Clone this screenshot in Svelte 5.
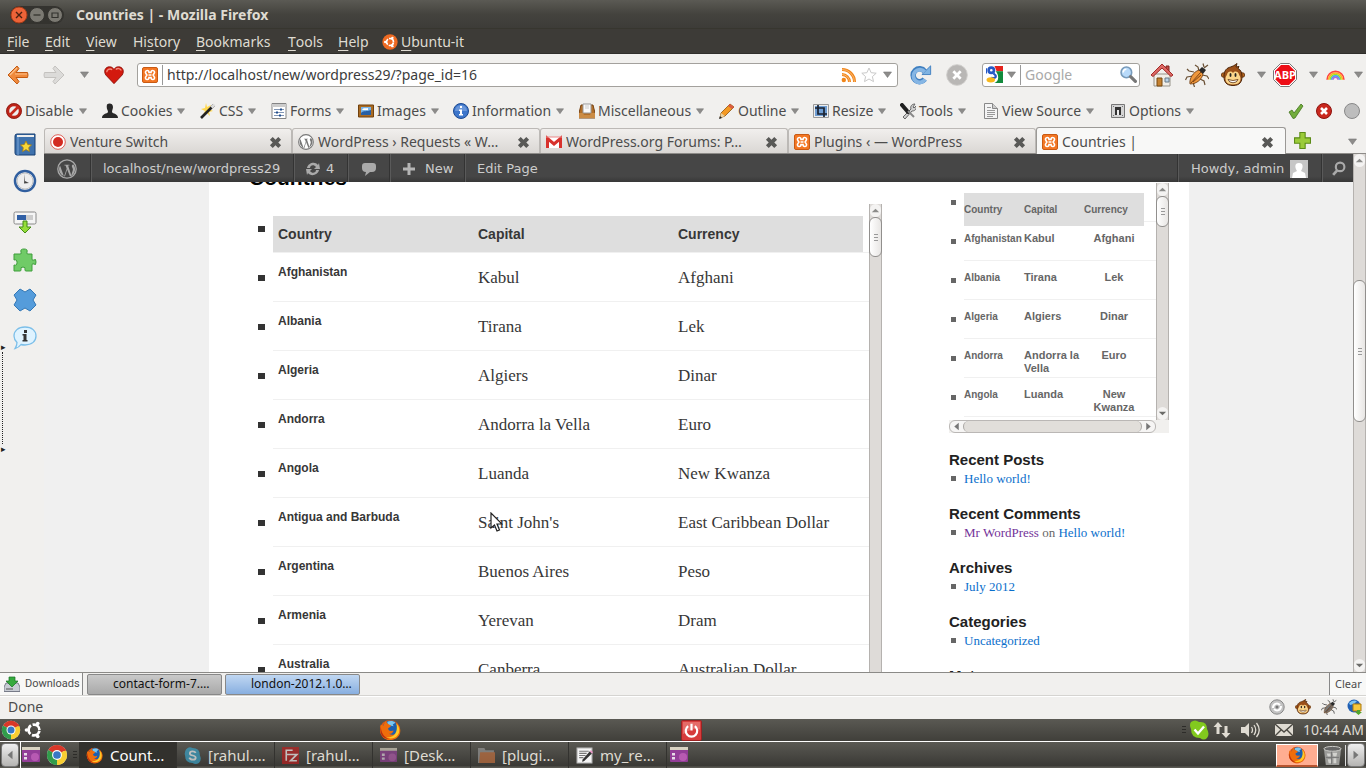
<script>
  const wpMark = (c) => `<circle cx="10" cy="10" r="9.2" fill="none" stroke="${c}" stroke-width="1.3"/><path d="M3 6.4 7 17.6 9.7 9.8 8.6 6.6H7.4V5.8h5v.8h-1.3l3.2 9.6 1.5-5c.5-1.8-1.1-3-1-4.300.1-1 .9-1.600 1.700-1.500A7.800 7.800 0 0 1 13 17.400L10.200 10.400 7.900 17.600A7.800 7.800 0 0 1 3 6.400z" fill="${c}"/>`;
  const xampp = '<rect x=".5" y=".5" width="15" height="15" rx="1.500" fill="#f37623" stroke="#c85a14"/><path d="M5.300 3.500c-1.800 0-2.300 1.800-1.400 3l1 1.500-1 1.500c-.9 1.200-.4 3 1.400 3 1.300 0 1.700-.8 1.700-2h2c0 1.200.4 2 1.700 2 1.800 0 2.300-1.800 1.400-3l-1-1.500 1-1.500c.9-1.200.4-3-1.400-3-1.300 0-1.700.8-1.700 2H7c0-1.200-.4-2-1.700-2zM6.500 8h3" fill="none" stroke="#fff" stroke-width="1.600"/>';
  const monkey = '<circle cx="2.600" cy="12" r="2.300" fill="#b5651d" stroke="#5a2d0c" stroke-width=".8"/><circle cx="21.400" cy="12" r="2.300" fill="#b5651d" stroke="#5a2d0c" stroke-width=".8"/><path d="M12 22.500c-7 0-9-4-9-9C3 7 6 5 9.500 4c2-.6 4-1.500 6.500-3.500L15 4l3-.5-1 2c3 1.500 4 4.500 4 8 0 5-2 9-9 9z" fill="#9b5019" stroke="#4a2408"/><path d="M12 21.500c-6 0-7.500-3-7.500-6 0-2 1-2.500 1.500-4C6.500 8 11 7.500 12 10c1-2.500 5.500-2 6 1.500.500 1.500 1.500 2 1.500 4 0 3-1.500 6-7.500 6z" fill="#fbd58a"/><ellipse cx="9.500" cy="12" rx="1" ry="2" fill="#222"/><ellipse cx="14.500" cy="12" rx="1" ry="2" fill="#222"/><path d="M7 16.500q5 2 10 0-1 3.300-5 3.300t-5-3.300z" fill="#fff" stroke="#5a2d0c" stroke-width=".8"/>';
  const bug = (c, l) => `<g fill="none" stroke="${l}" stroke-width="1.200"><path d="m9 9-5-1-2-2M8 13l-6 1-1.500 3M10 18l-1.500 3 1 3M14 8l-1-4-3-2M17 12l5 1 2 3M15 16l4 2 1 4M19 5l4-3M19 4l-1-3.500"/></g><path d="M5 21c-1-5 3-12 9-14l4 4c-1 5-6 10-13 10z" fill="${c}" stroke="#68360c" stroke-width=".8"/><path d="M6 20 16 9M8 19l8-7" stroke="#633009" stroke-width=".8"/><path d="m14 7 3-3 4 3-3 4z" fill="#292929"/>`;
  const firefox = '<circle cx="12" cy="12" r="11" fill="#e8590c"/><circle cx="12.500" cy="10" r="8.500" fill="#1d5fae"/><path d="M9 3c3-1.500 7-1 9 1l-3 2 1 2-4-1-2 2z" fill="#79c6ef"/><path d="M2 6c1 1 2 1 3 1 1-3 2-4 3-5 0 2 1 3 3 4l2 1c0 2-2 2-3 3 0 2 1 3 3 3l3-.5c-1 3-3 4-5 3.500 4 3 9 0 9-4 1 1 1 3 .5 4C20 12 21 8 18 4c4 2 6 6 5 11-1 5-6 8-11 8C4 23-1 14 2 6z" fill="#ef6d0b"/><path d="M19 5c4 4 4 10 1 13-3 4-9 4-12 2 9 1 13-6 11-15z" fill="#ffc928"/><path d="M2 8c0 6 3 12 9 14C4 22 0 16 2 8z" fill="#b93010"/>';
  const chrome = '<circle cx="12" cy="12" r="11" fill="#ddd"/><path d="M12 12 2.500 6.500A11 11 0 0 1 21.500 6.500z" fill="#d93829"/><path d="M12 12 21.500 6.500A11 11 0 0 1 12 23z" fill="#f9ce32"/><path d="M12 12 12 23A11 11 0 0 1 2.500 6.500z" fill="#319c4b"/><path d="M12 6.500h9.500" stroke="#d93829" stroke-width="2"/><circle cx="12" cy="12" r="5.400" fill="#fff"/><circle cx="12" cy="12" r="4.200" fill="#3878c5"/>';
  const desk = '<rect x="0" y="1" width="18" height="15" rx="1" fill="#933e98"/><rect x="0" y="1" width="18" height="3" fill="#d9d3c2"/><circle cx="13" cy="11" r="4" fill="#c667bd" opacity=".7"/><path d="M2 7h3v2.500H2zM2 11h3v2.500H2z" fill="#e8dbe8"/>';
  const ubuntu = (c) => `<circle cx="12" cy="12" r="6.500" fill="none" stroke="${c}" stroke-width="3.200" stroke-dasharray="11.600 2" stroke-dashoffset="-.9"/><circle cx="3" cy="12" r="2.200" fill="${c}"/><circle cx="16.500" cy="4.200" r="2.200" fill="${c}"/><circle cx="16.500" cy="19.800" r="2.200" fill="${c}"/>`;

  const icons = {
    ubuntu: [24, '<circle cx="12" cy="12" r="11.500" fill="#ee6a22"/><circle cx="12" cy="12" r="5.200" fill="none" stroke="#fff" stroke-width="2.500" stroke-dasharray="9.300 1.600" stroke-dashoffset="-.6"/><g fill="#fff"><circle cx="4.800" cy="12" r="1.800"/><circle cx="15.600" cy="5.800" r="1.800"/><circle cx="15.600" cy="18.200" r="1.800"/></g>'],
    ubuntuWhite: [24, ubuntu('#fff')],
    back: [24, '<path d="M11 3 2 12l9 9 2-2.500-3-4h11.500q1-2.500 0-5H10l3-4z" fill="#f08a3c" stroke="#c25a12" stroke-linejoin="round"/><path d="M4 12 11 5M9 11h12" stroke="#fbc08a" stroke-width="1.200"/>'],
    forward: [24, '<path d="m13 3 9 9-9 9-2-2.500 3-4H2.500q-1-2.500 0-5H14l-3-4z" fill="#dcdbd9" stroke="#c4c2bf" stroke-linejoin="round"/>'],
    heart: [22, '<path d="M11 20.500 2 11C-1 6 2 2 6 2c3 0 4 1.500 5 3 1-1.500 2-3 5-3 4 0 7 4 4 9z" fill="#d3190e" stroke="#8f1008"/><path d="M3 8c0-3 3-4.500 6-3M13 5c2-2 5-1 6 1" fill="none" stroke="#f48b7c" stroke-width="1.500"/>'],
    xampp: [16, xampp],
    rss: [16, '<g fill="none" stroke="#f08519" stroke-width="3"><path d="M1 2.500A12.500 12.500 0 0 1 13.500 15M1 7.500A7.500 7.500 0 0 1 8.500 15"/></g><circle cx="2.800" cy="13" r="2.200" fill="#f08519"/><path d="M1 2.500A12.500 12.500 0 0 1 13.500 15M1 7.500A7.500 7.500 0 0 1 8.500 15" fill="none" stroke="#fcc184" stroke-width=".8"/>'],
    star: [16, '<path d="m8 1 2.100 4.700 5.100.5-3.800 3.400 1.100 5L8 12l-4.500 2.600 1.100-5L.8 6.200l5.100-.5z" fill="#fff" stroke="#c9c9c9"/>'],
    reload: [24, '<path d="M16 15.500A7 7 0 1 1 16 7" transform="translate(0 1)" fill="none" stroke="#3f7fc0" stroke-width="6"/><path d="M13 11.500h9.500V2z" fill="#7fb3e2" stroke="#3f7fc0"/><path d="M16.500 16.500A7 7 0 1 1 16 8" transform="translate(0 .500)" fill="none" stroke="#86b6e4" stroke-width="4"/>'],
    stop: [24, '<circle cx="12" cy="12" r="11.300" fill="#b9b7b5" stroke="#cfcdcb"/><path d="m8 8 8 8m0-8-8 8" stroke="#fff" stroke-width="3"/>'],
    google: [16, '<path fill="#fff" d="M0 0h16v16H0z"/><path d="M8 0h8v5h-6z" fill="#e5231d"/><path d="M9 5h7v11H8c5-2 4-8 1-11z" fill="#128a3c"/><path d="M0 9c4-1 7 1 7 4v3H0z" fill="#fff"/><circle cx="5" cy="4" r="2.500" fill="none" stroke="#2558c5" stroke-width="2.500"/><path d="M7 7c4 3 2 5-2 4M0 2v5" fill="none" stroke="#2558c5" stroke-width="2"/><ellipse cx="4.500" cy="13" rx="4" ry="2.500" fill="#f8b81b"/>'],
    search: [16, '<circle cx="6" cy="6" r="5" fill="#b8dafa" stroke="#789bbb" stroke-width="1.500"/><path d="M3 6q0-3 3-3" stroke="#fff" stroke-width="1.500" fill="none"/><path d="m10 10 4.500 4.500" stroke="#777" stroke-width="3" stroke-linecap="round"/>'],
    home: [24, '<path d="M4 11h16v12H4z" fill="#f1eee8" stroke="#98938a"/><path d="M16 3h3v5h-3z" fill="#c64a45" stroke="#802421"/><path d="M12 1 1 12l2 1.500 9-8.500 9 8.500 2-1.500z" fill="#dc6864" stroke="#a22b28" stroke-linejoin="round"/><path d="M7 15h5v8H7z" fill="#c58130" stroke="#774811"/><path d="M15 15h4v4h-4z" fill="#b9d3e9" stroke="#687a88"/>'],
    bug: [24, bug('#ef973c', '#6a5034')],
    bugGrey: [24, bug('#777', '#444')],
    monkey: [24, monkey],
    abp: [24, '<path d="M7.500.500h9l7 7v9l-7 7h-9l-7-7v-9z" fill="#fff" stroke="#777"/><path d="M8 2h8l6 6v8l-6 6H8l-6-6V8z" fill="#ed0d16"/>'],
    rainbow: [18, '<g fill="none" stroke-width="1.500"><path d="M1 14a8 8 0 0 1 16 0" stroke="#ff4242"/><path d="M2.500 14a6.500 6.500 0 0 1 13 0" stroke="#ffac28"/><path d="M4 14a5 5 0 0 1 10 0" stroke="#9ce81e"/><path d="M5.300 14a3.700 3.700 0 0 1 7.400 0" stroke="#45a7f5"/><path d="M6.600 14a2.400 2.400 0 0 1 4.800 0" stroke="#a66fe0"/></g>'],
    disable: [16, '<circle cx="8" cy="8" r="6.300" fill="#eee" stroke="#be2418" stroke-width="3"/><circle cx="8" cy="8" r="7.500" fill="none" stroke="#7f160f" stroke-width=".7"/><path d="m3.500 12.500 9-9" stroke="#c72a1d" stroke-width="2.600"/>'],
    cookies: [16, '<path d="M5 1.500C7-.300 11 .3 11 4c0 2-1 3-1 5 1 2 6 1.500 6 6H0c0-4.500 5-4 6-6 0-2-2-3-1-7.500z" fill="#282828"/>'],
    css: [16, '<path d="m6 0 1 4 4-2-2 4 4 2-4 1 1 4-3-3-4 2 2-4-4-2 4-1z" fill="#ffd84f"/><path d="M1 15 14 2" stroke="#222" stroke-width="2.600"/><path d="m11.500 4.500 3-3" stroke="#ddd" stroke-width="2.600"/>'],
    forms: [16, '<path d="M1 .500h14v15H1z" fill="#fff" stroke="#858585"/><path d="M1 1h14v3H1z" fill="#ccc"/><path d="M3 6.500h10M3 9.500h10M3 12.500h10" stroke="#8095b4"/><path d="M9 5.500h2v2H9zM5 8.500h2v2H5zM8 11.500h2v2H8z" fill="#214f8f"/>'],
    images: [16, '<path d="M.500 2h15v12H.500z" fill="#a96b23" stroke="#70410d"/><path d="M3 4h10v8H3z" fill="#79b5eb"/><path d="M3 10c3-3 5-1 10-3v5H3z" fill="#2860a5"/><path d="M4 7c2-3 3-1 6-2v2z" fill="#fff"/>'],
    info: [16, '<circle cx="8" cy="8" r="7.500" fill="#3d76cb" stroke="#1c4991"/><path d="M2 8a6 6 0 0 1 12 0z" fill="#8eb1e8" opacity=".55"/><path d="M7 3h2v2H7zM6 6.500h3V12H7V8H6zM6 11h4v1.500H6z" fill="#fff"/>'],
    misc: [16, '<path d="M2 2h12l2 8v5H0v-5z" fill="#b36f29" stroke="#774210"/><path d="M4 1h8v9H4z" fill="#fafafa" stroke="#999"/><path d="M6 3h4M6 5h4" stroke="#ccc"/><path d="M0 10h4l1 2h6l1-2h4v5H0z" fill="#cb8c45"/>'],
    outline: [16, '<path d="m2 10 9-9 4 3-9 9-5 2z" fill="#f49923" stroke="#8d540b" stroke-width=".8"/><path d="m11 1 4 3-2 2-4-3z" fill="#db5c42"/><path d="m2 10 4 3-5 2z" fill="#e8d0a2"/><path d="m1 13-1 3 3-1z" fill="#222"/>'],
    resize: [16, '<path d="M.500 1.500h15v13H.500z" fill="#eee" stroke="#999"/><path d="M2 3h12v10H2z" fill="#6f9ed4"/><path d="M5 2v9h9M2 5h9v9" fill="none" stroke="#1a2230" stroke-width="1.700"/>'],
    tools: [16, '<path d="m3 14 8-8c-1-3 1-5 4-5l-2 3 1 1 2-2c1 4-2 5-4 5l-7 8z" fill="#cfcfcf" stroke="#686868"/><path d="m2 2 6 7" stroke="#202020" stroke-width="4" stroke-linecap="round"/><path d="m8 8 6 6" stroke="#888" stroke-width="2"/>'],
    source: [16, '<path d="M1.500.500h8l5 5v10h-13z" fill="#f4f4f4" stroke="#888"/><path d="M9.500.500v5h5" fill="#ccc" stroke="#888"/><path d="M4 4.500h4M4 7.500h8M4 9.500h8M4 11.500h8M4 13.500h6" stroke="#999"/>'],
    options: [16, '<path d="M1.500 1.500h13v13h-13z" fill="#d5d5d5" stroke="#777"/><path d="M5 4h6v8H5z" fill="#333"/><path d="M7 7h2v5H7z" fill="#eee"/><path d="M3 3h1v1H3zM12 3h1v1h-1zM3 12h1v1H3zM12 12h1v1h-1z" fill="#777"/>'],
    check: [16, '<path d="m1 9 3-2 2 3 7-9 2 2-8 12-2 .500z" fill="#72ad3c" stroke="#44751e" stroke-width=".8"/>'],
    error: [16, '<circle cx="8" cy="8" r="7.500" fill="#c9281e" stroke="#8e120d"/><path d="m5 5 6 6m0-6-6 6" stroke="#fff" stroke-width="2.600"/>'],
    grey: [16, '<circle cx="8" cy="8" r="7.500" fill="#bdbdbd" stroke="#888"/>'],
    close: [14, '<path d="M4 1 7 4l3-3 3 3-3 3 3 3-3 3-3-3-3 3-3-3 3-3-3-3z" fill="#595957"/>'],
    plus: [16, '<path d="M5.500.500h5v5h5v5h-5v5h-5v-5h-5v-5h5z" fill="#9bcb3a" stroke="#5c8b17"/>'],
    venture: [16, '<circle cx="8" cy="8" r="7.300" fill="#fff" stroke="#dc5047" stroke-width=".9"/><circle cx="8" cy="8" r="5" fill="#d22b22"/>'],
    wpTab: [20, '<circle cx="10" cy="10" r="9" fill="#fff"/>' + wpMark('#777')],
    wpBar: [20, wpMark('#a9a9a9')],
    gmail: [16, '<path d="M0 3h16v11H0z" fill="#fff"/><path d="M1.500 14V4.500L8 10l6.500-5.500V14" fill="none" stroke="#d8322d" stroke-width="3"/><path d="M0 3h16" stroke="#e88" />'],
    update: [16, '<path d="M2 7c1-5 8-7 11-3l1-2 1 6H9l2-2C9 3 5 4 5 7zM14 9c-1 5-8 7-11 3l-1 2-1-6h6l-2 2c2 3 6 2 6-1z" fill="#aaa"/>'],
    comment: [16, '<path d="M4 2h8q3 0 3 3v2q0 4-4 4H9l-5 4 1-4Q1 11 1 7V5q0-3 3-3z" fill="#aaa"/>'],
    add: [12, '<path d="M4.500 0h3v4.500H12v3H7.500V12h-3V7.500H0v-3h4.500z" fill="#b5b5b5"/>'],
    lens: [14, '<circle cx="8.500" cy="5.500" r="4" fill="none" stroke="#aaa" stroke-width="2"/><path d="m6 8.500-4 4.500" stroke="#aaa" stroke-width="2.500"/>'],
    avatar: [18, '<path d="M0 0h18v18H0z" fill="#c6c6c6"/><path d="M9 3c5 0 4 5 2 8l4 2 1 5H2l1-5 4-2C5 8 4 3 9 3z" fill="#fff"/>'],
    book: [24, '<path d="M4 1h18v21H4q-2 0-2-2V3q0-2 2-2z" fill="#3f72ad" stroke="#163e73"/><path d="M4 2h17v2H4z" fill="#eee"/><path d="M5 4v18" stroke="#7ba5d8"/><path d="m13 8 1.700 3.500 3.800.500-2.800 2.600.7 3.900-3.400-1.900-3.400 1.900.7-3.900L7.500 12l3.800-.5z" fill="#f8d838" stroke="#aa7e0e" stroke-width=".8"/>'],
    clock: [24, '<circle cx="12" cy="12" r="10" fill="#fff" stroke="#315f9f" stroke-width="2.500"/><circle cx="12" cy="12" r="8" fill="#eee" stroke="#aaa" stroke-width=".7"/><path d="M12 5v7l4 2-5 .500z" fill="#444"/>'],
    download: [24, '<rect x="1" y="2" width="22" height="12" rx="1.500" fill="#f5f5f5" stroke="#888"/><path d="M4 5h16v5H4z" fill="#ccc"/><path d="M4 5h9v5H4z" fill="#305fa5"/><path d="M10 11h4v6h4l-6 6-6-6h4z" fill="#95dd3a" stroke="#438b14"/>'],
    puzzle: [24, '<path d="M1 6h6q2 0 1-2-1-3 3-3t3 3q-1 2 1 2h4v5q0 2 2 1 2-2 2 2t-2 2q-2-1-2 1v6h-6q-1 0-1-1 1-3-2-3t-2 3q0 1-1 1H1v-6q3 1 3-2.500T1 12z" fill="#70cb67" stroke="#3e9e3a"/>'],
    cross: [24, '<path d="m7 1 5 3 5-3 6 6-3 5 3 5-6 6-5-3-5 3-6-6 3-5-3-5z" fill="#559cdb" stroke="#3478b6"/>'],
    bubble: [24, '<path d="M12 1c7 0 11 4 11 9s-4 9-11 9q-2 0-4-.500-2 3-6 4 2-3 2-6-3-3-3-6.500C1 5 5 1 12 1z" fill="#dff3ff" stroke="#7cbfe9" stroke-width="1.300"/><path d="M11 4h3v3h-3zM9.500 8h4v6h1v1.500h-5V14h1V9.500h-1z" fill="#333"/>'],
    drive: [16, '<path d="M2 7h12l2 4v4.500H0V11z" fill="#c8ccd4" stroke="#777b88"/><path d="M5 1h6v4h3l-6 6-6-6h3z" fill="#36aa3e" stroke="#177122" stroke-width=".7"/><path d="M2 13h7" stroke="#555"/>'],
    gear: [16, '<circle cx="8" cy="8" r="7.200" fill="#c3c3c3" stroke="#888"/><path d="M4 9c0-4 4-6 7-3M12 7c0 4-4 6-7 3" fill="none" stroke="#fff" stroke-width="2"/><circle cx="8" cy="8" r="1.500" fill="#777"/>'],
    globe: [16, '<circle cx="7" cy="7" r="6.500" fill="#2160b4"/><path d="M2 4c3-3 6-3 8-2l-3 3-4 1z" fill="#7ec4f2"/><path d="M6 5h8v7H6z" fill="#f7c73c" stroke="#ae7a0e"/><path d="M10 11h3v2h2l-3.500 3L8 13h2z" fill="#53a62a"/>'],
    firefox: [24, firefox],
    chrome: [24, chrome],
    power: [22, '<rect x=".500" y=".500" width="21" height="21" rx="1.500" fill="#d63c3c" stroke="#9d2222"/><path d="M2 2h18v8q-8-2-18 5z" fill="#ee8a84" opacity=".6"/><path d="M7.500 6.500a6 6 0 1 0 7 0M11 4v7" fill="none" stroke="#fff" stroke-width="2.300"/>'],
    skypeOk: [20, '<path d="M2 2q4-3 8 0 8-1 8 7 3 5 0 9-3 3-7 0-9 0-9-9-2-4 0-7z" fill="#82c91e"/><path d="m5.500 9.500 3.500 4 6-7" fill="none" stroke="#fff" stroke-width="2.400"/>'],
    network: [18, '<path d="m5 1 4.500 5H6.500v7h-3V6h-3zM13 17l-4.500-5h3V5h3v7h3z" fill="#dfdbd2"/>'],
    volume: [20, '<path d="M1 7h4l4-4v14l-4-4H1z" fill="#dfdbd2"/><path d="M11.500 7q2 3 0 6M14 5q3.500 5 0 10M16.500 3q5.500 7 0 14" fill="none" stroke="#dfdbd2" stroke-width="1.300"/>'],
    mail: [20, '<path d="M1 4h18v12H1z" fill="#dfdbd2"/><path d="m1 4 9 8 9-8M1 16l6-6M19 16l-6-6" fill="none" stroke="#4b4943" stroke-width="1.400"/>'],
    skype: [16, '<path d="M2 2q3-3 6-1 7 0 7 7 2 4-1 7-3 2-6 0-7 0-7-7-1-3 1-6z" fill="#3aa8cf"/><path d="M11 5.500C10 3.500 5.500 3.500 5.500 6S11 7.500 11 10s-5 2.500-6 0" fill="none" stroke="#fff" stroke-width="1.700"/>'],
    filezilla: [16, '<path d="M0 0h16v16H0z" fill="#c01d1d"/><path d="M4 13V3h6M4 7h4M8 7h6l-6 6h6" fill="none" stroke="#fff" stroke-width="1.500"/>'],
    desk: [18, desk],
    folder: [16, '<path d="M0 1h6l1 2h8v12H0z" fill="#999"/><path d="M2 5h14v10H1z" fill="#c8723f"/>'],
    edit: [16, '<path d="M1 1h14v14H1z" fill="#f5f5f5" stroke="#bbb"/><path d="M3 4h9M3 6h7M3 8h6M3 10h4" stroke="#777"/><path d="m6 12 7-8 2 2-7 7-2 1z" fill="#333"/><path d="m13 4 1-1 2 2-1 1z" fill="#e88cc1"/>'],
    trash: [22, '<path d="M2 4h18l-2 17H4z" fill="#9b9b98"/><ellipse cx="11" cy="4" rx="9" ry="2.500" fill="#666" stroke="#cfcfcb"/><path d="M5 9h4v3H6zM11 8h5l-1 4h-3zM6 15h4v4H7zM12 14h3v5h-3z" fill="#d2d2ce"/><path d="M10 7v13M4 13h14" stroke="#777"/>'],
    left: [12, '<path d="M9 1v10L3 6z" fill="#777"/>'],
    right: [12, '<path d="M3 1v10l6-5z" fill="#777"/>'],
    up: [12, '<path d="M2 8h8L6 4z" fill="#8c8c8a"/>'],
    down: [12, '<path d="M2 4h8L6 8z" fill="#6b6b69"/>'],
    caret: [9, '<path d="M.500 2h8L4.500 7.500z" fill="#8d8c8a" stroke="#777" stroke-width=".6"/>'],
    winClose: [18, '<circle cx="9" cy="9" r="8" fill="#ec6338" stroke="#a63c18"/><path d="m6 6 6 6m0-6-6 6" stroke="#4a2010" stroke-width="1.400"/>'],
    winMin: [18, '<circle cx="9" cy="9" r="7.500" fill="#7b7972" stroke="#33322e"/><path d="M5.500 9h7" stroke="#33322e" stroke-width="1.300"/>'],
    winMax: [18, '<circle cx="9" cy="9" r="7.500" fill="#7b7972" stroke="#33322e"/><path d="M6 7h6v4.500H6z" fill="none" stroke="#33322e" stroke-width="1.200"/>'],
  };

  const menus = [['F', 'ile'], ['E', 'dit'], ['V', 'iew'], ['Hi', 'story', 1], ['B', 'ookmarks'], ['T', 'ools'], ['H', 'elp']];
  const tools = [['disable', 'Disable'], ['cookies', 'Cookies'], ['css', 'CSS'], ['forms', 'Forms'], ['images', 'Images'], ['info', 'Information'], ['misc', 'Miscellaneous'], ['outline', 'Outline'], ['resize', 'Resize'], ['tools', 'Tools'], ['source', 'View Source'], ['options', 'Options']];
  const tabs = [['venture', 'Venture Switch'], ['wpTab', 'WordPress › Requests « W…'], ['gmail', 'WordPress.org Forums: P…'], ['xampp', 'Plugins ‹ — WordPress'], ['xampp', 'Countries |']];
  const countries = [['Afghanistan', 'Kabul', 'Afghani'], ['Albania', 'Tirana', 'Lek'], ['Algeria', 'Algiers', 'Dinar'], ['Andorra', 'Andorra la Vella', 'Euro'], ['Angola', 'Luanda', 'New Kwanza'], ['Antigua and Barbuda', "Saint John's", 'East Caribbean Dollar'], ['Argentina', 'Buenos Aires', 'Peso'], ['Armenia', 'Yerevan', 'Dram'], ['Australia', 'Canberra', 'Australian Dollar']];
  const tasks = [['firefox', 'Count…'], ['skype', '[rahul.…'], ['filezilla', '[rahul…'], ['desk', '[Desk…'], ['folder', '[plugi…'], ['edit', 'my_re…']];
  let address = $state('http://localhost/new/wordpress29/?page_id=16');
</script>

{#snippet icon(name, size)}
  <svg width={size} height={size} viewBox="0 0 {icons[name][0]} {icons[name][0]}" aria-hidden="true">{@html icons[name][1]}</svg>
{/snippet}

{#snippet vbar(kind)}
  <div class="vbar {kind}">
    <span class="cap">{@render icon('up', 11)}</span>
    <span class="thumb"><i></i></span>
    <span class="rest"></span>
    <span class="cap">{@render icon('down', 11)}</span>
  </div>
{/snippet}

<div class="screen">
  <header class="title">
    <div class="wins">
      <button aria-label="Close">{@render icon('winClose', 18)}</button>
      <button aria-label="Minimize">{@render icon('winMin', 18)}</button>
      <button aria-label="Maximize">{@render icon('winMax', 18)}</button>
    </div>
    <strong>Countries | - Mozilla Firefox</strong>
  </header>

  <nav class="menu" aria-label="Menu bar">
    {#each menus as [a, b, late]}
      <button>{#if late}{a}<u>s</u>{b.slice(1)}{:else}<u>{a}</u>{b}{/if}</button>
    {/each}
    <button class="ub">{@render icon('ubuntu', 16)}<span><u>U</u>buntu-it</span></button>
  </nav>

  <div class="navbar">
    <button aria-label="Back">{@render icon('back', 24)}</button>
    <button aria-label="Forward">{@render icon('forward', 24)}</button>
    <button aria-label="History">{@render icon('caret', 9)}</button>
    <button aria-label="Favourite">{@render icon('heart', 20)}</button>
    <div class="url">
      {@render icon('xampp', 16)}
      <i class="bar"></i>
      <input aria-label="Address" bind:value={address} />
      {@render icon('rss', 16)}
      {@render icon('star', 16)}
      <button aria-label="Addresses">{@render icon('caret', 9)}</button>
    </div>
    <button aria-label="Reload">{@render icon('reload', 22)}</button>
    <button aria-label="Stop">{@render icon('stop', 22)}</button>
    <div class="find">
      {@render icon('google', 17)}
      {@render icon('caret', 9)}
      <i class="bar"></i>
      <input aria-label="Search" placeholder="Google" />
      {@render icon('search', 17)}
    </div>
    <button aria-label="Home">{@render icon('home', 24)}</button>
    <button aria-label="Firebug">{@render icon('bug', 24)}</button>
    <button aria-label="Greasemonkey">{@render icon('monkey', 24)}</button>
    <button aria-label="Script menu">{@render icon('caret', 9)}</button>
    <button aria-label="Adblock" class="abp">{@render icon('abp', 24)}<b>ABP</b></button>
    <button aria-label="Adblock menu">{@render icon('caret', 9)}</button>
    <button aria-label="Rainbow">{@render icon('rainbow', 19)}</button>
    <button aria-label="Rainbow menu">{@render icon('caret', 9)}</button>
  </div>

  <div class="devbar">
    {#each tools as [ic, label]}
      <button>{@render icon(ic, 16)}<span>{label}</span>{@render icon('caret', 8)}</button>
    {/each}
    <div class="marks">{@render icon('check', 16)}{@render icon('error', 16)}{@render icon('grey', 16)}</div>
  </div>

  <div class="work">
    <aside class="rail">
      <i class="grip">▸<span></span>▸</i>
      {#each ['book', 'clock', 'download', 'puzzle', 'cross', 'bubble'] as n}
        <button aria-label={n}>{@render icon(n, 24)}</button>
      {/each}
    </aside>

    <div class="browser">
      <div class="tabs">
        {#each tabs as [ic, label], i}
          <div class="tab" class:on={i === 4}>
            {@render icon(ic, 16)}<span>{label}</span>
            <button aria-label="Close tab">{@render icon('close', 13)}</button>
          </div>
        {/each}
        <button aria-label="New tab" class="new">{@render icon('plus', 17)}</button>
        <button aria-label="All tabs" class="all">{@render icon('caret', 9)}</button>
      </div>

      <div class="view">
        <div class="doc">
          <nav class="admin" aria-label="Toolbar">
            <a href="#wp" class="a1" aria-label="About WordPress">{@render icon('wpBar', 20)}</a>
            <a href="#site" class="a2">localhost/new/wordpress29</a>
            <a href="#updates" class="a3">{@render icon('update', 16)}4</a>
            <a href="#comments" class="a4" aria-label="Comments">{@render icon('comment', 16)}</a>
            <a href="#new" class="a5">{@render icon('add', 12)}New</a>
            <a href="#edit" class="a6">Edit Page</a>
            <a href="#user" class="a7">Howdy, admin {@render icon('avatar', 18)}</a>
            <a href="#search" class="a8" aria-label="Search">{@render icon('lens', 15)}</a>
          </nav>

          <div class="page">
            <main>
              <h1>Countries</h1>
              <div class="box">
                <div class="clip">
                  <table class="big">
                    <thead>
                      <tr><td><i class="dot"></i></td><th>Country</th><th>Capital</th><th>Currency</th><td class="end"></td></tr>
                    </thead>
                    <tbody>
                      {#each countries as [c, cap, cur]}
                        <tr><td><i class="dot"></i></td><th>{c}</th><td>{cap}</td><td>{cur}</td><td class="end"></td></tr>
                      {/each}
                    </tbody>
                  </table>
                </div>
                {@render vbar('main')}
              </div>
              <svg class="cursor" width="13" height="20" viewBox="0 0 13 20" aria-hidden="true"><path d="M1 1v15l3.500-3 2.500 6 2.500-1-2.500-6H12z" fill="#fff" stroke="#222" stroke-width="1.200" /></svg>
            </main>

            <aside class="side">
              <div class="widget">
                <div class="clip">
                  <table class="small">
                    <thead>
                      <tr><td><i class="dot"></i></td><th><span>Country</span></th><th><span>Capital</span></th><th><span>Currency</span></th><td class="end"></td></tr>
                    </thead>
                    <tbody>
                      {#each countries.slice(0, 5) as [c, cap, cur]}
                        <tr><td><i class="dot"></i></td><th>{c}</th><td>{cap}</td><td>{cur}</td><td class="end"></td></tr>
                      {/each}
                    </tbody>
                  </table>
                </div>
                {@render vbar('mini')}
                <div class="hbar"><span>{@render icon('left', 9)}</span><i></i><span>{@render icon('right', 9)}</span></div>
              </div>
              <h3>Recent Posts</h3>
              <ul><li><a href="#hello">Hello world!</a></li></ul>
              <h3>Recent Comments</h3>
              <ul><li><a href="#mr" class="seen">Mr WordPress</a> on <a href="#hello">Hello world!</a></li></ul>
              <h3>Archives</h3>
              <ul><li><a href="#july">July 2012</a></li></ul>
              <h3>Categories</h3>
              <ul><li><a href="#none">Uncategorized</a></li></ul>
              <h3>Meta</h3>
            </aside>
          </div>
        </div>
        {@render vbar('outer')}
      </div>
    </div>
  </div>

  <div class="downs">
    <button class="dl">{@render icon('drive', 16)}Downloads</button>
    <button class="file">contact-form-7.…</button>
    <button class="file blue">london-2012.1.0…</button>
    <button class="clear">Clear</button>
  </div>
  <footer class="status"><span>Done</span><div>{@render icon('gear', 16)}{@render icon('monkey', 16)}{@render icon('bugGrey', 16)}{@render icon('globe', 16)}</div></footer>

  <div class="panel">
    <div class="launch">{@render icon('chrome', 20)}{@render icon('ubuntuWhite', 20)}</div>
    <div class="ff">{@render icon('firefox', 22)}</div>
    <div class="pw">{@render icon('power', 21)}</div>
    <div class="tray">
      <i class="ticks"></i>
      {@render icon('skypeOk', 20)}{@render icon('network', 18)}{@render icon('volume', 20)}{@render icon('mail', 20)}
      <time>10:44 AM</time>
    </div>
  </div>
  <div class="taskbar">
    <button class="arrow" aria-label="Scroll left">{@render icon('left', 10)}</button>
    <div class="quick">{@render icon('desk', 18)}{@render icon('chrome', 22)}<i class="ticks"></i></div>
    {#each tasks as [ic, label], i}
      <button class="task" class:on={i === 0} class:dim={i > 0 && i < 5}>{@render icon(ic, 17)}<span>{label}</span></button>
    {/each}
    <div class="last">{@render icon('desk', 18)}</div>
    <div class="space">{@render icon('firefox', 18)}</div>
    <div class="bin">{@render icon('trash', 21)}</div>
    <button class="arrow" aria-label="Scroll right">{@render icon('right', 10)}</button>
  </div>
</div>

<style>
  :global(body) { margin: 0; background: #f1f0ee; }
  * { box-sizing: border-box; }
  svg { display: block; flex: none; }
  button { border: 0; padding: 0; margin: 0; background: none; font: inherit; color: inherit; display: flex; align-items: center; white-space: nowrap; }
  input { border: 0; padding: 0; background: none; outline: 0; font: inherit; color: #3c3c3c; min-width: 0; flex: 1; }
  a { text-decoration: none; }
  u { text-underline-offset: 3px; text-decoration-thickness: 1px; }
  .screen { height: 100vh; display: flex; flex-direction: column; overflow: hidden; font: 14px/20px "Noto Sans", sans-serif; color: #4c4c4c; background: #f1f0ee; }
  .screen > * { flex: none; }
  .screen > .work { flex: 1; }

  .title { height: 29px; display: flex; align-items: center; gap: 12px; padding: 2px 0 0 10px; color: #dfdbd2; background: linear-gradient(#5b5a54, #44433e 50%, #3d3c38); border-bottom: 1px solid #37362f; }
  .wins { display: flex; border-radius: 10px; background: #34332f; }
  .menu { height: 25px; display: grid; grid-template-columns: 38px 41px 47px 63px 92px 50px 44px auto; justify-content: start; padding: 2px 0 0 7px; color: #dfdbd2; background: #3d3b37; border-bottom: 1px solid #2f2e2b; }
  .ub { gap: 3px; }

  .navbar { height: 41px; display: grid; grid-template-columns: 36px 38px 24px 33px 1fr 36px 36px 168px 35px 36px 36px 16px 36px 17px 28px 12px; align-items: center; padding-left: 6px; }
  .url, .find { display: flex; align-items: center; height: 24px; border: 1px solid #a3a19d; border-radius: 3px; background: #fff; }
  .url { padding: 0 5px 0 4px; gap: 4px; margin-right: 12px; }
  .url button { margin-left: 2px; }
  .find { width: 158px; padding: 0 2px 0 3px; gap: 4px; }
  .find input::placeholder { color: #a9a9a9; opacity: 1; }
  .bar { width: 1px; height: 20px; background: #999; }
  .abp { display: grid; justify-content: start; }
  .abp > :global(*) { grid-area: 1 / 1; }
  .abp b { font: bold 11px/24px "Open Sans", sans-serif; color: #fff; width: 24px; text-align: center; }

  .devbar { height: 32px; display: grid; grid-template-columns: 96px 98px 71px 87px 95px 126px 140px 94px 87px 83px 127px 90px 1fr; padding-left: 6px; align-items: center; }
  .devbar button { gap: 3px; }
  .devbar span { padding-right: 2px; }
  .marks { display: flex; justify-content: flex-end; gap: 12px; padding-right: 6px; }

  .work { display: flex; min-height: 0; }
  .rail { width: 44px; display: grid; grid-template-rows: 36px 36px 46px 30px 50px 26px; align-items: center; justify-items: end; padding-right: 7px; position: relative; align-content: start; }
  .grip { position: absolute; left: 1px; top: 215px; font: 9px/10px "DejaVu Sans", sans-serif; color: #222; display: flex; flex-direction: column; align-items: flex-start; }
  .grip span { height: 92px; border-left: 1px dotted #222; margin-left: 1px; }
  .browser { flex: 1; display: flex; flex-direction: column; min-width: 0; }
  .tabs { height: 27px; display: grid; grid-template-columns: repeat(4, 248fr) 250fr 62px 18px; align-items: end; border-bottom: 1px solid #8d8b88; }
  .tab { height: 25px; display: flex; align-items: center; gap: 4px; padding: 2px 9px 0 5px; background: linear-gradient(#f1efed, #dad7d4); border: 1px solid #bcb9b6; border-bottom: 0; border-radius: 3px 3px 0 0; overflow: hidden; white-space: nowrap; }
  .tab span { flex: 1; min-width: 0; overflow: hidden; }
  .tab.on { height: 27px; background: #f8f8f7; border-color: #9b9996; margin-bottom: -1px; padding-right: 11px; }
  .new { padding: 0 0 4px 8px; }
  .all { padding-bottom: 7px; }

  .view { flex: 1; display: flex; min-height: 0; }
  .doc { flex: 1; min-width: 0; display: flex; flex-direction: column; background: #f0f0f0; }
  .admin { flex: none; height: 28px; display: flex; color: #ccc; background: linear-gradient(#464646 80%, #383838); font: 13px/26px "DejaVu Sans", sans-serif; }
  .admin a { color: inherit; display: flex; align-items: center; border-right: 1px solid #333; white-space: nowrap; padding-top: 1px; }
  .admin a + a { border-left: 1px solid #5a5a5a; }
  .a1 { width: 47px; justify-content: center; }
  .a2 { width: 203px; padding-left: 11px; }
  .a3 { width: 54px; gap: 5px; padding-left: 10px; }
  .a4 { width: 42px; justify-content: center; }
  .a5 { width: 75px; gap: 10px; padding-left: 12px; }
  .admin .a6 { padding-left: 11px; flex: 1; }
  .a7 { width: 144px; gap: 6px; padding-left: 12px; }
  .admin .a8 { width: 31px; justify-content: center; border-right: 0; }

  .page { flex: 1; min-height: 0; overflow: hidden; margin: 0 164px 0 165px; background: #fff; display: flex; justify-content: space-between; padding: 0 20px 0 40px; }
  main { width: 633px; position: relative; display: flex; flex-direction: column; min-height: 0; }
  h1 { font: bold 21px/24px "Liberation Sans", sans-serif; color: #000; margin: -16px 0 14px; flex: none; }
  .box { display: flex; flex: 1; min-height: 0; }
  .clip { flex: 1; min-width: 0; overflow: hidden; }
  table { border-collapse: separate; border-spacing: 0; table-layout: fixed; width: 100%; }
  th, td { padding: 0; text-align: left; }
  .dot { display: block; }
  .big { margin-top: 12px; color: #373737; font: 17px/24px "Liberation Serif", serif; }
  .big th, .big td { border-bottom: 1px solid #f0f0f0; padding: 2px 0 0 5px; height: 49px; }
  .big tr > :first-child { width: 24px; padding: 0 0 0 9px; border: 0; }
  .big tr > .end { width: 6px; padding: 0; }
  .big thead th, .big thead td { height: 37px; }
  .big thead th { background: #dedede; font: bold 14px/20px "Liberation Sans", sans-serif; width: 200px; padding-top: 0; }
  .big thead th:nth-child(4) { width: 190px; }
  .big tbody th { font: bold 12px/18px "Liberation Sans", sans-serif; padding: 0 0 10px 5px; }
  .big .dot { width: 7px; height: 6px; background: #333; }
  .big thead .dot { margin: 0 0 12px; }
  .cursor { position: absolute; left: 241px; top: 330px; }

  .side { width: 220px; color: #666; }
  .widget { display: grid; grid-template-columns: 1fr 13px; grid-template-rows: 237px 13px; margin: 1px 0 17px; background: #f1f0ee; }
  .widget .clip { background: #fff; }
  .small { font: bold 11px/13px "Liberation Sans", sans-serif; margin-top: 6px; }
  .small td, .small th { height: 39px; border-bottom: 1px solid #f0f0f0; width: 60px; vertical-align: top; padding-top: 10px; }
  .small th { font-size: 10px; white-space: nowrap; }
  .small tr > :first-child { width: 15px; padding: 17px 0 0 2px; border: 0; }
  .small thead tr > :first-child { padding-top: 11px; }
  .small tr > .end { width: 12px; }
  .small tbody td:nth-child(4) { text-align: center; }
  .small thead th { height: 33px; padding: 4px 0 0; border: 0; }
  .small thead td { height: 33px; }
  .small thead th span { display: block; background: #dedede; line-height: 33px; margin-bottom: -5px; }
  .small .dot { width: 5px; height: 5px; background: #666; }
  h3 { font: bold 15px/20px "Liberation Sans", sans-serif; color: #222; margin: 0; }
  .side ul { margin: 0 0 16px; padding: 0 0 0 15px; list-style: none; font: 13px/18px "Liberation Serif", serif; }
  li::before { content: ""; float: left; width: 5px; height: 5px; margin: 6px 0 0 -13px; background: #666; }
  .side a { color: #0b6fcc; }
  .side a.seen { color: #743399; }

  .vbar { width: 13px; flex: none; display: flex; flex-direction: column; background: #dedbd8; border: solid #b5b2af; border-width: 0 1px; }
  .cap { height: 13px; display: grid; place-items: center; background: #f4f3f2; border-radius: 6px; flex: none; }
  .thumb { height: 40px; flex: none; border: 1px solid #918f8d; border-radius: 6px; background: linear-gradient(90deg, #fff, #e8e6e4); display: grid; place-items: center; margin: 0 -1px; }
  .thumb i { width: 4px; height: 7px; background: repeating-linear-gradient(#999 0 1px, transparent 1px 3px); }
  .rest { flex: 1; }
  .mini .thumb { height: 31px; }
  .outer .thumb { height: 142px; margin-top: 113px; }
  .main .cap:last-child { display: none; }
  .hbar { display: flex; height: 13px; border: 1px solid #bab7b5; border-radius: 6px; background: #f6f5f4; }
  .hbar span { width: 13px; display: grid; place-items: center; }
  .hbar i { flex: 1; border: solid #aaa7a4; border-width: 0 1px; border-radius: 6px; background: #e1deda; }

  .downs { height: 24px; border-top: 1px solid #8b8a87; border-bottom: 1px solid #d5d4d1; display: flex; align-items: center; gap: 3px; font: 12px/16px "Noto Sans", sans-serif; }
  .dl { gap: 5px; width: 83px; height: 22px; padding-left: 4px; font: 11px/16px Roboto, sans-serif; border-right: 1px solid #888; background: #f8f8f7; }
  .file { width: 135px; height: 21px; padding-left: 25px; color: #111; border: 1px solid #888; border-radius: 2px; background: linear-gradient(#c9c9c9, #a9a9a9); }
  .dl + .file { margin-left: 1px; }
  .file.blue { background: linear-gradient(#c0d7f2, #88afe0); }
  .clear { margin-left: auto; font-size: 11px; height: 22px; width: 37px; padding-left: 5px; border-left: 1px solid #888; background: #f8f8f7; }
  .status { height: 23px; display: flex; justify-content: space-between; align-items: center; padding: 0 3px 2px 8px; border-top: 1px solid #fff; }
  .status div { display: flex; gap: 10px; }

  .panel { height: 22px; display: flex; align-items: center; padding: 0 2px 0 1px; background: linear-gradient(#5a5953, #403f3a); color: #dfdbd2; }
  .launch { display: flex; gap: 3px; width: 378px; }
  .ff { width: 302px; }
  .tray { display: grid; grid-template-columns: 7px 24px 27px 34px 29px auto; align-items: center; margin-left: auto; }
  .tray time { white-space: nowrap; }
  .ticks { width: 4px; height: 8px; background: repeating-linear-gradient(#2d2c29 0 1px, transparent 1px 3px); }
  .taskbar { height: 27px; display: flex; align-items: center; border-top: 1px solid #fff; background: linear-gradient(#5a5953, #3a3935 92%, #5a5953 96%); color: #dfdbd2; padding: 0 1px; font-size: 15px; }
  .arrow { width: 18px; height: 24px; justify-content: center; border-radius: 4px; background: linear-gradient(#eee, #b5b4b2); border: 1px solid #777; flex: none; }
  .quick { width: 59px; height: 26px; display: flex; align-items: center; gap: 6px; border-left: 1px solid #fff; margin-left: 1px; padding-left: 1px; }
  .quick .ticks { margin-left: -1px; }
  .task { width: 98px; height: 26px; padding-left: 7px; gap: 7px; border-right: 1px solid #33322f; flex: none; }
  .task.on { background: #32312d; color: #fff; }
  .dim :global(svg) { opacity: .65; }
  .last { width: 18px; margin-left: 3px; }
  .space { margin-left: auto; width: 42px; height: 23px; display: grid; place-items: center; background: #ffad91; border: 1px solid #fff; border-bottom: 2px solid #b85530; }
  .bin { padding: 0 2px 0 4px; margin-right: 1px; border-right: 1px solid #ddd; }
</style>
